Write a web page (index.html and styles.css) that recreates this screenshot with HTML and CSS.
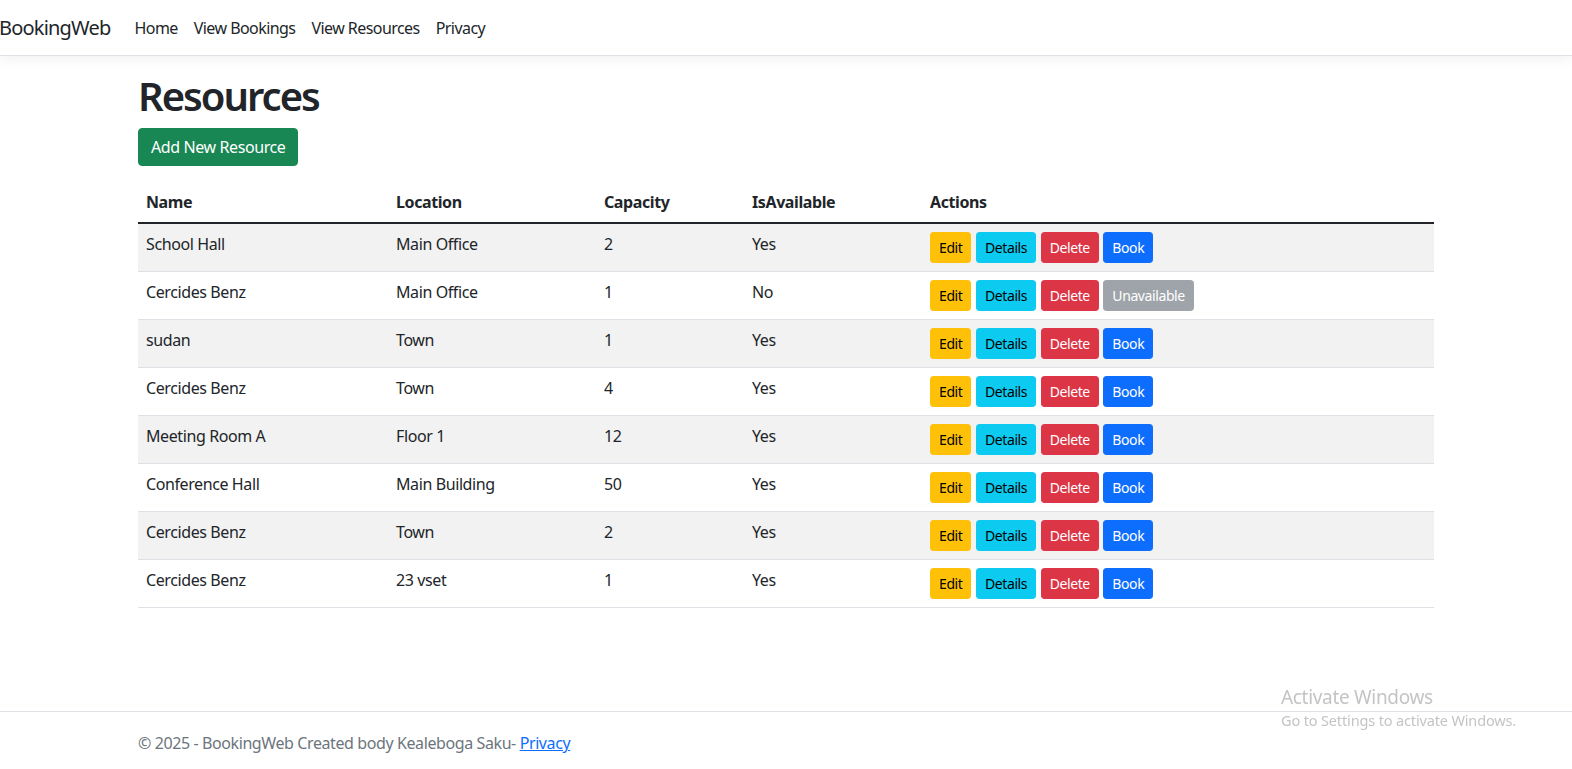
FILE: index.html
```html
<!DOCTYPE html>
<html lang="en">
<head>
<meta charset="utf-8">
<title>Resources - BookingWeb</title>
<link rel="stylesheet" href="styles.css">
</head>
<body>
<header>
  <nav class="navbar">
    <div class="navbar-inner">
      <a class="brand" href="#">BookingWeb</a>
      <ul class="nav">
        <li><a class="nav-link" href="#">Home</a></li>
        <li><a class="nav-link" href="#">View Bookings</a></li>
        <li><a class="nav-link" href="#">View Resources</a></li>
        <li><a class="nav-link" href="#">Privacy</a></li>
      </ul>
    </div>
  </nav>
</header>
<main class="container main">
  <h1 class="title">Resources</h1>
  <p class="create"><a class="btn btn-success" href="#">Add New Resource</a></p>
  <table class="table">
    <colgroup>
      <col class="c-name"><col class="c-loc"><col class="c-cap"><col class="c-avail"><col class="c-act">
    </colgroup>
    <thead>
      <tr><th>Name</th><th>Location</th><th>Capacity</th><th>IsAvailable</th><th>Actions</th></tr>
    </thead>
    <tbody>
      <tr><td>School Hall</td><td>Main Office</td><td>2</td><td>Yes</td><td><div class="actions"><a class="btn-sm warning" href="#">Edit</a><a class="btn-sm info" href="#">Details</a><a class="btn-sm danger" href="#">Delete</a><a class="btn-sm primary" href="#">Book</a></div></td></tr>
      <tr><td>Cercides Benz</td><td>Main Office</td><td>1</td><td>No</td><td><div class="actions"><a class="btn-sm warning" href="#">Edit</a><a class="btn-sm info" href="#">Details</a><a class="btn-sm danger" href="#">Delete</a><span class="btn-sm secondary disabled">Unavailable</span></div></td></tr>
      <tr><td>sudan</td><td>Town</td><td>1</td><td>Yes</td><td><div class="actions"><a class="btn-sm warning" href="#">Edit</a><a class="btn-sm info" href="#">Details</a><a class="btn-sm danger" href="#">Delete</a><a class="btn-sm primary" href="#">Book</a></div></td></tr>
      <tr><td>Cercides Benz</td><td>Town</td><td>4</td><td>Yes</td><td><div class="actions"><a class="btn-sm warning" href="#">Edit</a><a class="btn-sm info" href="#">Details</a><a class="btn-sm danger" href="#">Delete</a><a class="btn-sm primary" href="#">Book</a></div></td></tr>
      <tr><td>Meeting Room A</td><td>Floor 1</td><td>12</td><td>Yes</td><td><div class="actions"><a class="btn-sm warning" href="#">Edit</a><a class="btn-sm info" href="#">Details</a><a class="btn-sm danger" href="#">Delete</a><a class="btn-sm primary" href="#">Book</a></div></td></tr>
      <tr><td>Conference Hall</td><td>Main Building</td><td>50</td><td>Yes</td><td><div class="actions"><a class="btn-sm warning" href="#">Edit</a><a class="btn-sm info" href="#">Details</a><a class="btn-sm danger" href="#">Delete</a><a class="btn-sm primary" href="#">Book</a></div></td></tr>
      <tr><td>Cercides Benz</td><td>Town</td><td>2</td><td>Yes</td><td><div class="actions"><a class="btn-sm warning" href="#">Edit</a><a class="btn-sm info" href="#">Details</a><a class="btn-sm danger" href="#">Delete</a><a class="btn-sm primary" href="#">Book</a></div></td></tr>
      <tr><td>Cercides Benz</td><td>23 vset</td><td>1</td><td>Yes</td><td><div class="actions"><a class="btn-sm warning" href="#">Edit</a><a class="btn-sm info" href="#">Details</a><a class="btn-sm danger" href="#">Delete</a><a class="btn-sm primary" href="#">Book</a></div></td></tr>
    </tbody>
  </table>
</main>
<footer class="footer">
  <div class="container footer-inner">
    &copy; 2025 - BookingWeb Created body Kealeboga Saku- <a class="footer-link" href="#">Privacy</a>
  </div>
</footer>
<div class="watermark">
  <div class="wm-title">Activate Windows</div>
  <div class="wm-sub">Go to Settings to activate Windows.</div>
</div>
</body>
</html>
```

FILE: styles.css
```css
* { box-sizing: border-box; }
html, body { margin: 0; padding: 0; }
body {
  font-family: "Noto Sans", "Open Sans", sans-serif;
  font-size: 16px;
  line-height: 1.5;
  letter-spacing: -0.025em;
  color: #212529;
  background: #fff;
  min-height: 100vh;
  display: flex;
  flex-direction: column;
}
a { text-decoration: none; }

.navbar {
  border-bottom: 1px solid #dee2e6;
  box-shadow: 0 .25rem .75rem rgba(0,0,0,.05);
  padding: 8px 0 7px;
  margin-bottom: 16px;
  background: #fff;
}
.navbar-inner {
  display: flex;
  align-items: center;
}
.brand {
  font-size: 20px;
  line-height: 30px;
  padding: 5px 0;
  margin-right: 16px;
  color: #212529;
  margin-left: -1px;
  letter-spacing: -0.04em;
}
.nav {
  display: flex;
  list-style: none;
  margin: 0;
  padding: 0;
}
.nav-link {
  display: block;
  padding: 8px 8px;
  color: #212529;
  line-height: 24px;
  letter-spacing: -0.035em;
}

.container {
  width: 100%;
  max-width: 1320px;
  margin: 0 auto;
  padding: 0 12px;
}
.main { padding-bottom: 16px; flex: 1 0 auto; }

.title {
  font-size: 40px;
  font-weight: 600;
  line-height: 1.2;
  letter-spacing: -0.05em;
  margin: 0 0 8px;
}
.create { margin: 0 0 16px; }
.btn {
  display: inline-block;
  font-size: 16px;
  line-height: 24px;
  padding: 6px 12px;
  border: 1px solid transparent;
  border-radius: 4px;
}
.btn-success { background: #198754; border-color: #198754; color: #fff; }

.table {
  width: 100%;
  border-collapse: collapse;
  table-layout: fixed;
  margin-bottom: 16px;
  color: #212529;
}
.c-name { width: 250px; }
.c-loc { width: 208px; }
.c-cap { width: 148px; }
.c-avail { width: 178px; }
.table th, .table td {
  padding: 8px;
  text-align: left;
  vertical-align: top;
  border-bottom: 1px solid #dee2e6;
}
.table th { font-weight: 700; vertical-align: bottom; }
.table tbody { border-top: 2px solid #212529; }
.table tbody tr:nth-child(odd) td { background: #f2f2f2; }

.actions { display: flex; gap: 4.5px; }
.btn-sm {
  display: inline-block;
  font-size: 14px;
  line-height: 21px;
  padding: 4px 8px;
  border: 1px solid transparent;
  border-radius: 3.2px;
}
.warning { background: #ffc107; border-color: #ffc107; color: #000; }
.info { background: #0dcaf0; border-color: #0dcaf0; color: #000; }
.danger { background: #dc3545; border-color: #dc3545; color: #fff; }
.primary { background: #0d6efd; border-color: #0d6efd; color: #fff; }
.secondary { background: #6c757d; border-color: #6c757d; color: #fff; }
.disabled { opacity: .65; }

.footer {
  border-top: 1px solid #dee2e6;
  color: #6c757d;
  line-height: 62px;
  white-space: nowrap;
  height: 58px;
  flex-shrink: 0;
}
.footer-link { color: #0d6efd; text-decoration: underline; }

.watermark {
  position: fixed;
  left: 1281px;
  top: 684px;
  color: #c4c4c4;
  font-family: "Noto Sans", sans-serif;
  letter-spacing: -0.02em;
  pointer-events: none;
}
.wm-title { font-size: 19px; line-height: 26px; }
.wm-sub { font-size: 14.5px; line-height: 20px; letter-spacing: -0.01em; }
```
